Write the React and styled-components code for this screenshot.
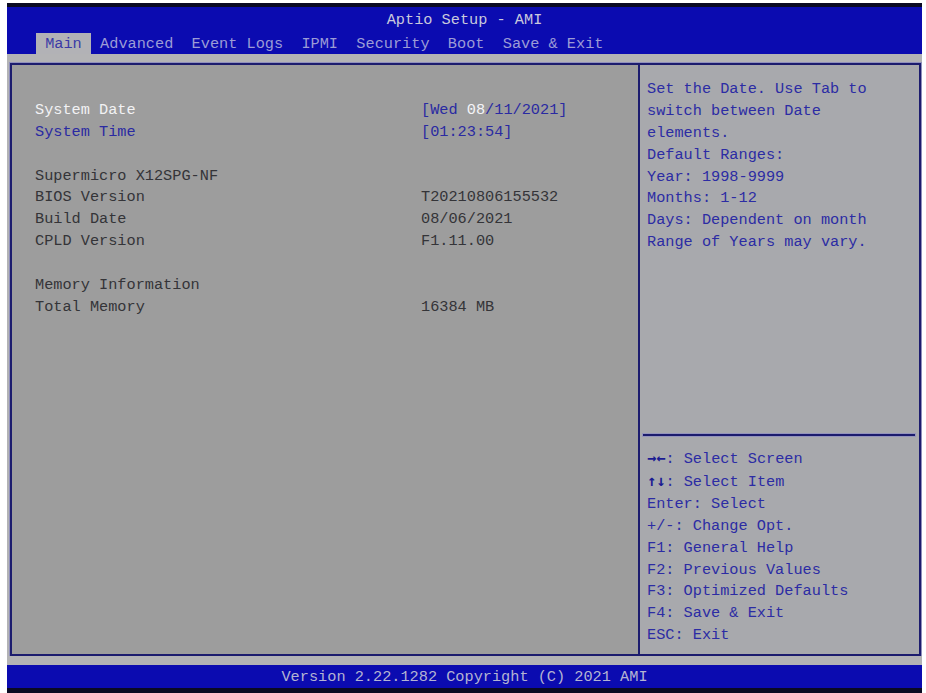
import React from 'react';
import styled, { createGlobalStyle } from 'styled-components';

const GlobalStyle = createGlobalStyle`
  body {
    margin: 0;
    background: #ffffff;
  }
`;

const tabs = ['Main', 'Advanced', 'Event Logs', 'IPMI', 'Security', 'Boot', 'Save & Exit'];

const help = [
  'Set the Date. Use Tab to',
  'switch between Date',
  'elements.',
  'Default Ranges:',
  'Year: 1998-9999',
  'Months: 1-12',
  'Days: Dependent on month',
  'Range of Years may vary.',
];

// first part is the key, drawn darker when it is an arrow pair
const keys = [
  ['→←', ': Select Screen'],
  ['↑↓', ': Select Item'],
  ['', 'Enter: Select'],
  ['', '+/-: Change Opt.'],
  ['', 'F1: General Help'],
  ['', 'F2: Previous Values'],
  ['', 'F3: Optimized Defaults'],
  ['', 'F4: Save & Exit'],
  ['', 'ESC: Exit'],
];

export default function App() {
  return (
    <>
      <GlobalStyle />
      <Screen>
        <Strip $h={4} />
        <Header>
          <Title>Aptio Setup - AMI</Title>
          <TabRow>
            {tabs.map((t, i) => (
              <Tab key={t} $active={i === 0}>{` ${t} `}</Tab>
            ))}
          </TabRow>
        </Header>
        <Band />
        <Box>
          <LeftPanel>
            <Blank />
            <Row $tone="selected">
              <span>System Date</span>
              <Value>
                [Wed <Hi>08</Hi>/11/2021]
              </Value>
            </Row>
            <Row $tone="link">
              <span>System Time</span>
              <Value>[01:23:54]</Value>
            </Row>
            <Blank />
            <Row>
              <span>Supermicro X12SPG-NF</span>
            </Row>
            <Row>
              <span>BIOS Version</span>
              <span>T20210806155532</span>
            </Row>
            <Row>
              <span>Build Date</span>
              <span>08/06/2021</span>
            </Row>
            <Row>
              <span>CPLD Version</span>
              <span>F1.11.00</span>
            </Row>
            <Blank />
            <Row>
              <span>Memory Information</span>
            </Row>
            <Row>
              <span>Total Memory</span>
              <span>16384 MB</span>
            </Row>
          </LeftPanel>
          <RightPanel>
            <HelpTop>
              {help.map((l) => (
                <Line key={l}>{l}</Line>
              ))}
            </HelpTop>
            <Divider />
            <HelpKeys>
              {keys.map(([k, l]) => (
                <Line key={l}>
                  {k && <Arrows>{k}</Arrows>}
                  {l}
                </Line>
              ))}
            </HelpKeys>
          </RightPanel>
        </Box>
        <Band />
        <Footer>Version 2.22.1282 Copyright (C) 2021 AMI</Footer>
        <Strip $h={5} />
      </Screen>
    </>
  );
}

const mono = `"Liberation Mono", "DejaVu Sans Mono", monospace`;

const Screen = styled.div`
  margin: 3px 4px 0 7px;
  height: 690px;
  display: flex;
  flex-direction: column;
  background: #b3b3b5;
  font-family: ${mono};
  font-size: 15.25px;
  white-space: pre;
`;

const Strip = styled.div`
  height: ${(p) => p.$h}px;
  background: #0a0a22;
`;

const Header = styled.div`
  height: 47px;
  background: #0b0bb0;
  display: flex;
  flex-direction: column;
`;

const Title = styled.div`
  text-align: center;
  line-height: 22px;
  padding-top: 2px;
  color: #c9c9dc;
`;

const TabRow = styled.div`
  margin-top: auto;
  display: flex;
  padding-left: 29px;
`;

const Tab = styled.span`
  height: 21px;
  line-height: 23px;
  color: ${(p) => (p.$active ? '#3a3aa6' : '#9c9cd6')};
  background: ${(p) => (p.$active ? '#b2b2b6' : 'transparent')};
`;

const Band = styled.div`
  height: 9px;
  background: #b3b3b5;
`;

const Box = styled.div`
  height: 589px;
  margin: 0 1px 0 3px;
  border: 2px solid #1c1c6e;
  box-shadow: 0 0 0 1px #9090bc, inset 0 0 0 1px #9494b8;
  display: flex;
`;

const LeftPanel = styled.div`
  width: 626px;
  border-right: 2px solid #1c1c6e;
  background: #9d9d9d;
  padding-top: 13px;
  color: #343438;
`;

const Blank = styled.div`
  height: 21.875px;
`;

const toneColor = {
  selected: '#f2f2f4',
  link: '#2a2aa2',
};

const Row = styled.div`
  display: grid;
  grid-template-columns: 386px 1fr;
  padding-left: 23px;
  line-height: 21.875px;
  color: ${(p) => toneColor[p.$tone] || '#343438'};
`;

const Value = styled.span`
  color: #2a2aa2;
`;

const Hi = styled.span`
  color: #f4f4f8;
`;

const RightPanel = styled.div`
  flex: 1;
  background: #a8a9ad;
  display: flex;
  flex-direction: column;
  color: #2c2ca4;
`;

const HelpTop = styled.div`
  flex: 1;
  padding: 14px 7px 0;
`;

const Line = styled.div`
  line-height: 21.875px;
`;

const Arrows = styled.span`
  font-family: "DejaVu Sans Mono", monospace;
  font-weight: bold;
  color: #1a1a92;
`;

const Divider = styled.div`
  height: 2px;
  margin: 0 4px 0 3px;
  background: #1c1c6e;
  box-shadow: 0 0 0 1px #9494bc;
`;

const HelpKeys = styled.div`
  padding: 12px 7px 7px;
`;

const Footer = styled.div`
  height: 23px;
  line-height: 25px;
  text-align: center;
  background: #0b0bb0;
  color: #b4b4d2;
`;
